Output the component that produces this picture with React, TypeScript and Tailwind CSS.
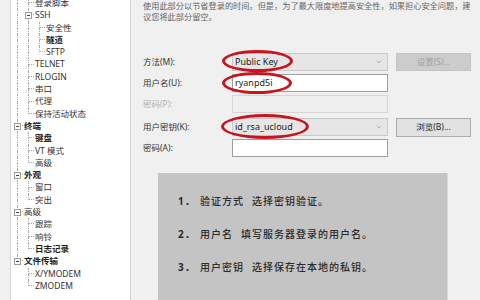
import { ChevronDown } from 'lucide-react';

type TreeRow = {
    text: string;
    level: number;
    bold?: boolean;
    expander?: boolean;
};

const treeRows: TreeRow[] = [
    { text: '登录脚本', level: 1 },
    { text: 'SSH', level: 1, expander: true },
    { text: '安全性', level: 2 },
    { text: '隧道', level: 2, bold: true },
    { text: 'SFTP', level: 2 },
    { text: 'TELNET', level: 1 },
    { text: 'RLOGIN', level: 1 },
    { text: '串口', level: 1 },
    { text: '代理', level: 1 },
    { text: '保持活动状态', level: 1 },
    { text: '终端', level: 0, bold: true, expander: true },
    { text: '键盘', level: 1, bold: true },
    { text: 'VT 模式', level: 1 },
    { text: '高级', level: 1 },
    { text: '外观', level: 0, bold: true, expander: true },
    { text: '窗口', level: 1 },
    { text: '突出', level: 1 },
    { text: '高级', level: 0, expander: true },
    { text: '跟踪', level: 1 },
    { text: '响铃', level: 1 },
    { text: '日志记录', level: 1, bold: true },
    { text: '文件传输', level: 0, bold: true, expander: true },
    { text: 'X/YMODEM', level: 1 },
    { text: 'ZMODEM', level: 1 },
];

// does the node at `level` (owning row i) still have a sibling further down?
function continuesBelow(i: number, level: number) {
    for (let j = i + 1; j < treeRows.length; j++) {
        if (treeRows[j].level < level) return false;
        if (treeRows[j].level === level) return true;
    }
    // the tree is scrolled: the top-level "连接" above keeps going
    return false;
}

function TreeCell({ vertical, own, last, expander }: { vertical: boolean; own: boolean; last: boolean; expander?: boolean }) {
    return (
        <div className="relative flex h-full w-[11px] shrink-0 flex-col">
            <div
                className={`ml-[5px] h-1/2 border-dotted border-[#a8a8a8] ${vertical || own ? 'border-l' : ''} ${own ? 'border-b' : ''}`}
            />
            <div
                className={`ml-[5px] flex-1 border-dotted border-[#a8a8a8] ${(vertical && !own) || (own && !last) ? 'border-l' : ''}`}
            />
            {expander && (
                <div className="absolute top-[calc(50%-3.5px)] left-[2px] flex h-[7px] w-[7px] items-center justify-center border border-[#9c9c9c] bg-white">
                    <div className="h-px w-[3px] bg-[#444]" />
                </div>
            )}
        </div>
    );
}

function Tree() {
    return (
        <div className="-mt-[3px] pl-[1px]">
            {treeRows.map((row, i) => {
                const cells = [];
                for (let k = 0; k <= row.level; k++) {
                    const own = k === row.level;
                    const last = own ? !continuesBelow(i, k) : false;
                    const vertical = own ? true : continuesBelow(i, k);
                    cells.push(
                        <TreeCell
                            key={k}
                            vertical={vertical}
                            own={own}
                            last={last}
                            expander={own && row.expander}
                        />,
                    );
                }
                return (
                    <div key={i} className="flex h-[12.3px] items-stretch">
                        {cells}
                        <span
                            className={`pl-[1px] text-[8.5px] leading-[12.3px] whitespace-nowrap ${row.bold ? 'font-bold text-[#1e1e1e]' : 'text-[#333]'}`}
                        >
                            {row.text}
                        </span>
                    </div>
                );
            })}
        </div>
    );
}

function Combo({ value }: { value: string }) {
    return (
        <div className="flex h-[18px] w-[156px] items-center justify-between border border-[#c9c9c9] bg-[#e6e6e6] pr-[4px] pl-[2px]">
            <span className="text-[9px] text-[#222]">{value}</span>
            <ChevronDown className="size-[8px] text-[#777]" strokeWidth={1.5} />
        </div>
    );
}

function TextBox({ value, disabled }: { value?: string; disabled?: boolean }) {
    return (
        <div
            className={`flex h-[18px] w-[156px] items-center border pl-[2px] ${disabled ? 'border-[#d6d6d6] bg-[#efefef]' : 'border-[#9e9e9e] bg-white'}`}
        >
            <span className="text-[9px] text-[#222]">{value}</span>
        </div>
    );
}

function Label({ children, muted }: { children: string; muted?: boolean }) {
    return (
        <span className={`w-[89px] shrink-0 text-[8.5px] ${muted ? 'text-[#b0b0b0]' : 'text-[#333]'}`}>
            {children}
        </span>
    );
}

function Step({ n, head, tail }: { n: string; head: string; tail: string }) {
    return (
        <div className="flex items-center text-[10px] leading-[33px] font-medium tracking-[1px] text-[#2b2b2b]">
            <span className="w-[22px] font-bold">{n}</span>
            <span>{head}</span>
            <span className="ml-[8px]">{tail}</span>
        </div>
    );
}

export default function App() {
    return (
        <div className="relative flex h-[300px] w-[480px] overflow-hidden bg-[#f0f0f0] font-['Noto_Sans','Noto_Sans_CJK_SC',sans-serif]">
            <div className="w-[10px] shrink-0" />
            <div className="h-full w-[121px] shrink-0 border-x border-[#d6d6d6] bg-white">
                <Tree />
            </div>

            <div className="flex flex-1 flex-col pl-[12px]">
                <p className="text-[8.2px] leading-[11px] whitespace-nowrap text-[#666]">
                    使用此部分以节省登录的时间。但是，为了最大限度地提高安全性，如果担心安全问题，建
                    <br />
                    议您将此部分留空。
                </p>

                <div className="mt-[31px] flex h-[18px] items-center">
                    <Label>方法(M):</Label>
                    <Combo value="Public Key" />
                    <div className="ml-[8px] flex h-[18px] w-[75px] items-center justify-center border border-[#c4c4c4] bg-[#cccccc] text-[8.5px] text-[#a2a2a2]">
                        设置(S)...
                    </div>
                </div>

                <div className="mt-[3px] flex h-[18px] items-center">
                    <Label>用户名(U):</Label>
                    <TextBox value="ryanpd5i" />
                </div>

                <div className="mt-[3px] flex h-[18px] items-center">
                    <Label muted>密码(P):</Label>
                    <TextBox disabled />
                </div>

                <div className="mt-[5px] flex h-[18px] items-center">
                    <Label>用户密钥(K):</Label>
                    <Combo value="id_rsa_ucloud" />
                    <div className="ml-[8px] flex h-[19px] w-[75px] items-center justify-center border border-[#adadad] bg-[#e1e1e1] text-[8.5px] text-[#222]">
                        浏览(B)...
                    </div>
                </div>

                <div className="mt-[3px] flex h-[18px] items-center">
                    <Label>密码(A):</Label>
                    <TextBox />
                </div>

                <div className="mt-[16px] ml-[15px] h-[140px] w-[290px] shrink-0 border-r border-[#dadada] bg-[#c4c4c4] pt-[12px] pl-[20px]">
                    <Step n="1．" head="验证方式" tail="选择密钥验证。" />
                    <Step n="2．" head="用户名" tail="填写服务器登录的用户名。" />
                    <Step n="3．" head="用户密钥" tail="选择保存在本地的私钥。" />
                </div>
            </div>

            {/* red highlight marks drawn over the dialog */}
            <div className="absolute top-[50px] left-[222px] h-[22px] w-[71px] rounded-[50%] border-[3px] border-[#c8141e]" />
            <div className="absolute top-[72px] left-[222px] h-[22px] w-[70px] rounded-[50%] border-[3px] border-[#c8141e]" />
            <div className="absolute top-[114px] left-[221px] h-[25px] w-[88px] rounded-[50%] border-[3px] border-[#c8141e]" />
        </div>
    );
}
